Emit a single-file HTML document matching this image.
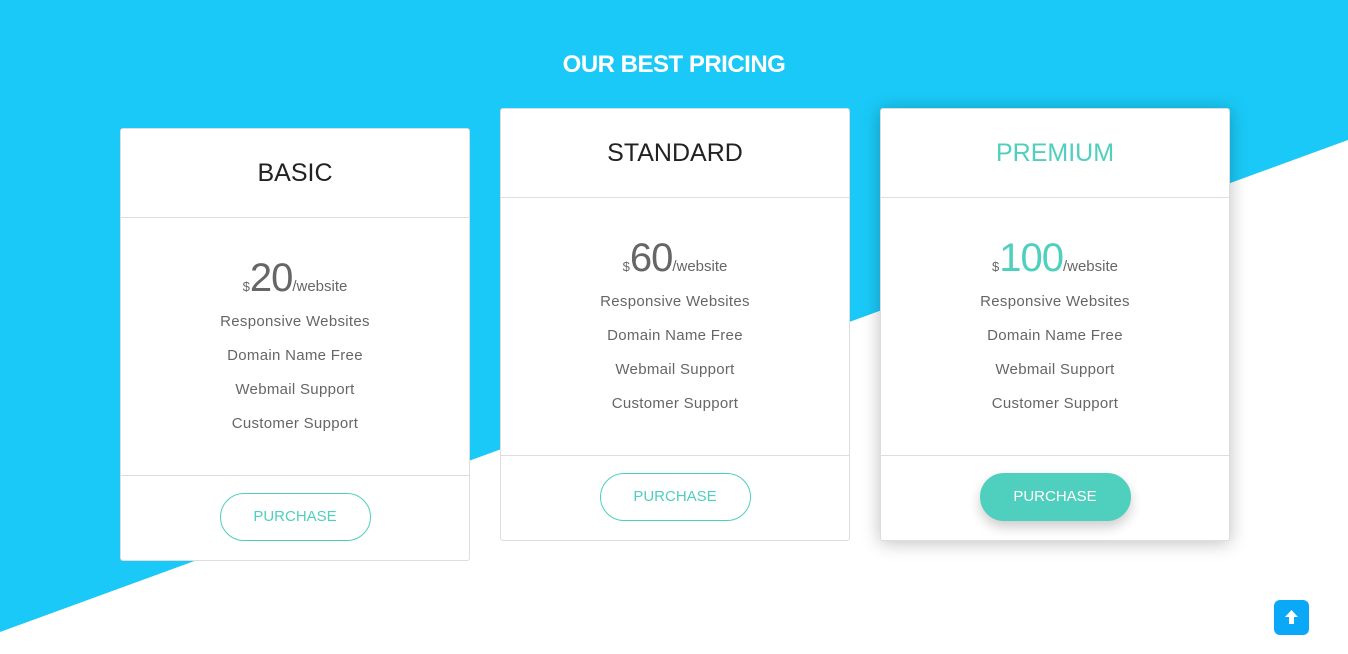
<!DOCTYPE html>
<html><head><style>
*{margin:0;padding:0;box-sizing:border-box}
body{width:1348px;height:654px;overflow:hidden;position:relative;background:#fff;font-family:"Liberation Sans",sans-serif}
.bg{position:absolute;left:0;top:0}
h1{position:absolute;top:51px;left:0;width:1348px;text-align:center;color:#fff;font-size:24px;font-weight:bold;letter-spacing:-0.5px}
.card{position:absolute;width:350px;background:#fff;border:1px solid #ddd;border-radius:3px;text-align:center}
.hd{height:89px;border-bottom:1px solid #ddd;line-height:89px;font-size:25px;color:#222}
.price{margin-top:38px;height:49px;color:#666;font-size:15px}
.price b{font-weight:normal;font-size:40px;color:#666;letter-spacing:-1px}
.price s{text-decoration:none;font-size:13px}
.f{font-size:15px;color:#666;height:34px;line-height:34px;letter-spacing:0.3px}
.ft{border-top:1px solid #ddd;height:85px;margin-top:34px;padding-top:17px}
.btn{display:inline-block;width:151px;height:48px;border:1px solid #4fcfbd;border-radius:24px;line-height:46px;color:#4fcfbd;font-size:15px}
.prem{box-shadow:0 2px 18px rgba(0,0,0,.25)}
.prem .hd,.prem .price b{color:#4fcfbd}
.prem .btn{background:#4fcfbd;color:#fff;box-shadow:0 6px 12px rgba(0,0,0,.2)}
.up{position:absolute;left:1274px;top:600px;width:35px;height:35px;background:#0aa8f7;border-radius:6px}
</style></head><body>
<svg class="bg" width="1348" height="654"><rect width="1348" height="654" fill="#1ac9f7"/><polygon points="0,632 1348,140 1348,654 0,654" fill="#fff"/></svg>
<h1>OUR BEST PRICING</h1>
<div class="card" style="left:120px;top:128px;height:433px">
<div class="hd">BASIC</div>
<div class="price"><s>$</s><b>20</b>/website</div>
<div class="f">Responsive Websites</div><div class="f">Domain Name Free</div><div class="f">Webmail Support</div><div class="f">Customer Support</div>
<div class="ft"><span class="btn">PURCHASE</span></div></div>
<div class="card" style="left:500px;top:108px;height:433px">
<div class="hd">STANDARD</div>
<div class="price"><s>$</s><b>60</b>/website</div>
<div class="f">Responsive Websites</div><div class="f">Domain Name Free</div><div class="f">Webmail Support</div><div class="f">Customer Support</div>
<div class="ft"><span class="btn">PURCHASE</span></div></div>
<div class="card prem" style="left:880px;top:108px;height:433px">
<div class="hd">PREMIUM</div>
<div class="price"><s>$</s><b>100</b>/website</div>
<div class="f">Responsive Websites</div><div class="f">Domain Name Free</div><div class="f">Webmail Support</div><div class="f">Customer Support</div>
<div class="ft"><span class="btn">PURCHASE</span></div></div>
<div class="up"><svg width="35" height="35"><path d="M17.5 10 L24 17 H20 V24 H15 V17 H11 Z" fill="#fff"/></svg></div>
</body></html>
